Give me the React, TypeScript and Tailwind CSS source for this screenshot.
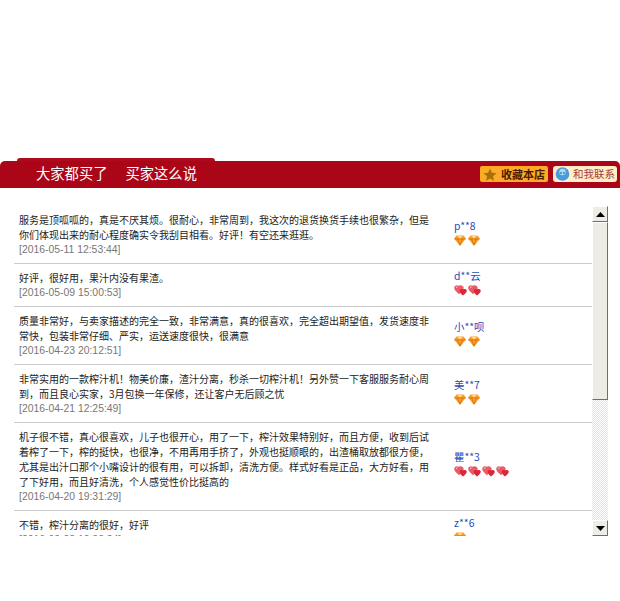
const cjk = "font-['Noto_Sans_CJK_SC','Noto_Sans',sans-serif]";

type Review = {
  text: string[];
  date: string;
  name: string;
  icon: "gem" | "heart";
  count: number;
};

const reviews: Review[] = [
  {
    text: [
      "服务是顶呱呱的，真是不厌其烦。很耐心，非常周到，我这次的退货换货手续也很繁杂，但是",
      "你们体现出来的耐心程度确实令我刮目相看。好评！有空还来逛逛。",
    ],
    date: "[2016-05-11 12:53:44]",
    name: "p**8",
    icon: "gem",
    count: 2,
  },
  {
    text: ["好评，很好用，果汁内没有果渣。"],
    date: "[2016-05-09 15:00:53]",
    name: "d**云",
    icon: "heart",
    count: 2,
  },
  {
    text: [
      "质量非常好，与卖家描述的完全一致，非常满意，真的很喜欢，完全超出期望值，发货速度非",
      "常快，包装非常仔细、严实，运送速度很快，很满意",
    ],
    date: "[2016-04-23 20:12:51]",
    name: "小**呗",
    icon: "gem",
    count: 2,
  },
  {
    text: [
      "非常实用的一款榨汁机！物美价廉，渣汁分离，秒杀一切榨汁机！另外赞一下客服服务耐心周",
      "到，而且良心实家，3月包换一年保修，还让客户无后顾之忧",
    ],
    date: "[2016-04-21 12:25:49]",
    name: "美**7",
    icon: "gem",
    count: 2,
  },
  {
    text: [
      "机子很不错，真心很喜欢，儿子也很开心，用了一下，榨汁效果特别好，而且方便，收到后试",
      "着榨了一下，榨的挺快，也很净，不用再用手挤了，外观也挺顺眼的，出渣桶取放都很方便，",
      "尤其是出汁口那个小嘴设计的很有用，可以拆卸，清洗方便。样式好看是正品，大方好看，用",
      "了下好用，而且好清洗，个人感觉性价比挺高的",
    ],
    date: "[2016-04-20 19:31:29]",
    name: "瞿**3",
    icon: "heart",
    count: 4,
  },
  {
    text: ["不错，榨汁分离的很好，好评"],
    date: "[2016-03-28 10:33:24]",
    name: "z**6",
    icon: "gem",
    count: 1,
  },
];

const Gem = () => (
  <svg width="12" height="11" viewBox="0 0 12 11" className="block">
    <path d="M2.500.5h7L12 3.500 6 11 0 3.500z" fill="#fb9f2c" />
    <path d="M.5 4h11M3.500 4 6 10 8.500 4" fill="none" stroke="#c9650f" strokeWidth="0.7" />
    <path d="M3.500 1h5L6 3.500z" fill="#ffdf94" />
  </svg>
);

const Heart = () => (
  <svg width="13" height="12" viewBox="0 0 13 12" className="block">
    <path d="M4.500.8C3-.3.300.300.200 3c-.1 2 2.300 4 4.800 6.200C7.400 7.200 9.800 5 9.700 3 9.600.300 6.200-.3 4.500.8z" fill="#ea5a68" />
    <path d="M9 4.500C7.800 3.600 5.700 4.100 5.600 5.800c-.1 1.500 1.800 3.300 3.400 4.800 1.600-1.500 3.800-3.300 3.800-4.800C12.800 4.100 10.200 3.600 9 4.500z" fill="#dc2836" />
    <path d="M2 2.500 3.500 1.800" stroke="#fbd5d8" strokeWidth="1" fill="none" />
  </svg>
);

const Arrow = ({ down }: { down?: boolean }) => (
  <div className="flex h-4 w-4 shrink-0 items-center justify-center border-t border-l border-t-white border-l-white bg-[#eeede5] border-r border-b border-r-[#716f64] border-b-[#716f64]">
    <svg width="9" height="5" viewBox="0 0 9 5">
      <path d={down ? "M0 0h9L4.500 5z" : "M0 5h9L4.500 0z"} fill="#000" />
    </svg>
  </div>
);

const Row = ({ review }: { review: Review }) => (
  <div className="flex shrink-0 items-center border-b border-[#cccccc] py-1.5">
    <div className="w-[440px] shrink-0 pl-[5px] text-[10px] leading-[15px] text-[#222]">
      {review.text.map((line) => (
        <p key={line} className="whitespace-nowrap">{line}</p>
      ))}
      <p className="font-['Liberation_Sans',sans-serif] text-[10.400px] text-[#777]">{review.date}</p>
    </div>
    <div className="-mt-1">
      <div className="text-[10.400px] leading-[15px] text-[#1f4bb8]">{review.name}</div>
      <div className="flex gap-[1px] pt-[2px] pb-[2px]">
        {Array.from({ length: review.count }).map((_, i) =>
          review.icon === "gem" ? (
            <div key={i} className="mr-[1px]"><Gem /></div>
          ) : (
            <Heart key={i} />
          )
        )}
      </div>
    </div>
  </div>
);

export default function App() {
  return (
    <div className={`h-[601px] w-[620px] overflow-hidden bg-white ${cjk}`}>
      <div className="h-[158px]" />

      {/* header */}
      <div className="ml-[17px] h-[3px] w-[198px] rounded-t-[3px] bg-[#ae0a1e]" />
      <div className="flex h-[27px] items-center justify-between rounded-t-[5px] bg-[#ab0618] pr-[3px]">
        <div className="flex gap-[18px] pb-[3px] pl-9 text-[14.300px] text-white">
          <span>大家都买了</span>
          <span>买家这么说</span>
        </div>
        <div className="flex items-center gap-[5px] pb-[1px]">
          <div className="flex h-4 w-[68px] items-center gap-[4px] rounded-[2px] bg-[#fdaa26] pl-[3px] text-[11px] font-bold text-[#4a1a00]">
            <svg width="14" height="13" viewBox="0 0 14 13">
              <path d="M7 .5 8.900 4.700 13.500 5.200 10 8.200 11 12.700 7 10.400 3 12.700 4 8.200.5 5.200 5.100 4.700z" fill="#a8700c" />
            </svg>
            <span>收藏本店</span>
          </div>
          <div className="flex h-4 w-[64px] items-center gap-[3px] rounded-[3px] bg-[#fff0c8] pl-[2px] text-[10.500px] text-[#a83a3a]">
            <svg width="15" height="14" viewBox="0 0 15 14">
              <circle cx="7.500" cy="7" r="6.800" fill="#4a9ade" />
              <circle cx="7.500" cy="5" r="3.200" fill="#a8dcf7" />
              <circle cx="6" cy="6" r="0.800" fill="#123a6a" />
              <circle cx="9" cy="6" r="0.800" fill="#123a6a" />
            </svg>
            <span>和我联系</span>
          </div>
        </div>
      </div>

      {/* list + scrollbar */}
      <div className="mt-[18px] flex h-[330px] pl-[14px]">
        <div className="flex h-full w-[578px] flex-col overflow-hidden">
          {reviews.map((r) => (
            <Row key={r.name} review={r} />
          ))}
        </div>
        <div className="flex h-full w-4 flex-col bg-[repeating-conic-gradient(#e4e2da_0_25%,#fff_0_50%)] bg-[length:2px_2px]">
          <Arrow />
          <div className="h-[178px] shrink-0 border-t border-l border-t-white border-l-white bg-[#eeede5] border-r border-b border-r-[#716f64] border-b-[#716f64]" />
          <div className="flex-1" />
          <Arrow down />
        </div>
      </div>
    </div>
  );
}
